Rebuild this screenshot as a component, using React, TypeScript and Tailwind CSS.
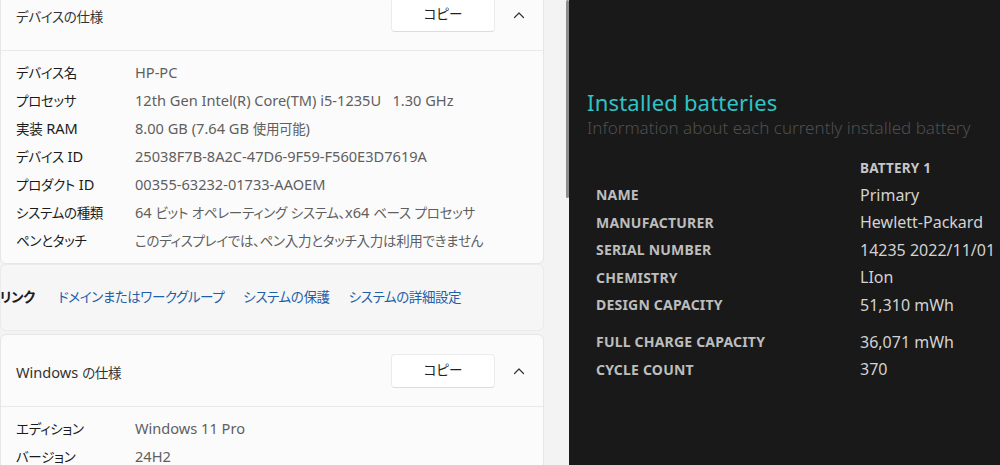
import React from "react";

const leftFont = "[font-family:'Noto_Sans','Noto_Sans_CJK_JP',sans-serif] [font-feature-settings:'palt']";
const rightFont = "[font-family:'Noto_Sans',sans-serif]";

// Japanese runs render narrower than Latin in the original UI font, so size them separately
const Mixed = ({ text }: { text: string }) => (
  <>
    {text.split(/([\u3000-\u30ff\u4e00-\u9fff\uff00-\uffef]+)/).map((part, i) =>
      part === "" ? null : /[\u3000-\u30ff\u4e00-\u9fff\uff00-\uffef]/.test(part) ? (
        <span key={i} className="text-[13.5px] tracking-[-0.3px]">{part}</span>
      ) : (
        <span key={i} className="text-[14.6px]">{part}</span>
      )
    )}
  </>
);

const Chevron = () => (
  <svg width="12" height="8" viewBox="0 0 12 8" fill="none">
    <polyline points="1.5,6.5 6,2 10.5,6.5" stroke="#333" strokeWidth="1.2" strokeLinecap="round" strokeLinejoin="round" />
  </svg>
);

const SpecCard = ({ title, rows }: { title: string; rows: [string, string][] }) => (
  <div className="bg-[#fbfbfb] border border-[#e6e6e6] rounded-[6px]">
    <div className="h-[72px] flex items-center pl-[15px] border-b border-[#e9e9e9]">
      <div className="flex-1 text-[#333] pt-[2px]">
        <Mixed text={title} />
      </div>
      <button className="w-[104px] h-[34px] bg-white border border-[#ebebeb] border-b-[#dcdcdc] rounded-[4px] text-[13.5px] text-[#222]">
        コピー
      </button>
      <div className="w-[48px] flex justify-center">
        <Chevron />
      </div>
    </div>
    <div className="pt-[7px] pb-[9px]">
      {rows.map(([k, v]) => (
        <div key={k} className="h-[28px] flex items-center pl-[15px] whitespace-pre">
          <div className="w-[119px] text-[#1b1b1b]">
            <Mixed text={k} />
          </div>
          <div className="text-[#5f5f5f]">
            <Mixed text={v} />
          </div>
        </div>
      ))}
    </div>
  </div>
);

const battery: [string, string][] = [
  ["NAME", "Primary"],
  ["MANUFACTURER", "Hewlett-Packard"],
  ["SERIAL NUMBER", "14235 2022/11/01"],
  ["CHEMISTRY", "LIon"],
  ["DESIGN CAPACITY", "51,310 mWh"],
];

const battery2: [string, string][] = [
  ["FULL CHARGE CAPACITY", "36,071 mWh"],
  ["CYCLE COUNT", "370"],
];

const BatteryRow = ({ k, v }: { k: string; v: string }) => (
  <div className="h-[27.5px] flex items-center">
    <div className="w-[273px] pl-[9px] text-[14px] font-bold text-[#bdbdbd] tracking-[0.2px]">{k}</div>
    <div className="text-[16px] text-[#d2d2d2]">{v}</div>
  </div>
);

export default function App() {
  return (
    <div className="w-[1000px] h-[465px] flex overflow-hidden bg-[#f3f3f3]">
      {/* Settings: About */}
      <div className={`w-[569px] h-full flex overflow-hidden ${leftFont}`}>
        <div className="w-[544px] shrink-0 -mt-[22px]">
          <SpecCard
            title="デバイスの仕様"
            rows={[
              ["デバイス名", "HP-PC"],
              ["プロセッサ", "12th Gen Intel(R) Core(TM) i5-1235U   1.30 GHz"],
              ["実装 RAM", "8.00 GB (7.64 GB 使用可能)"],
              ["デバイス ID", "25038F7B-8A2C-47D6-9F59-F560E3D7619A"],
              ["プロダクト ID", "00355-63232-01733-AAOEM"],
              ["システムの種類", "64 ビット オペレーティング システム、x64 ベース プロセッサ"],
              ["ペンとタッチ", "このディスプレイでは、ペン入力とタッチ入力は利用できません"],
            ]}
          />
          <div className="h-[67px] flex items-center bg-[#f6f6f6] border border-[#ebebeb] rounded-[6px] whitespace-nowrap">
            <div className="w-[34px] shrink-0 flex justify-end font-semibold text-[#1b1b1b]">
              <span className="text-[13.5px] tracking-[-0.3px]">関連リンク</span>
            </div>
            <div className="flex gap-[19px] ml-[23px] text-[#1f5ea8] text-[13.5px] tracking-[-0.4px]">
              <span>ドメインまたはワークグループ</span>
              <span>システムの保護</span>
              <span>システムの詳細設定</span>
            </div>
          </div>
          <div className="mt-[3px]">
            <SpecCard
              title="Windows の仕様"
              rows={[
                ["エディション", "Windows 11 Pro"],
                ["バージョン", "24H2"],
              ]}
            />
          </div>
        </div>
        <div className="flex-1 flex justify-end">
          <div className="w-[3px] h-[198px] bg-[#8c8c8c] rounded-full" />
        </div>
      </div>

      {/* Battery report */}
      <div className={`flex-1 h-full bg-[#191919] pt-[88px] pl-[18px] ${rightFont}`}>
        <div className="text-[22px] leading-[28px] text-[#2fc3c6] tracking-[0.2px]">Installed batteries</div>
        <div className="mt-[1px] text-[17px] leading-[22px] text-[#4e4e4e] font-light">
          Information about each currently installed battery
        </div>
        <div className="mt-[19px] mb-[3px] h-[20px] flex items-center">
          <div className="w-[273px]" />
          <div className="text-[13.5px] font-bold text-[#c6c6c6] tracking-[0.2px]">BATTERY 1</div>
        </div>
        {battery.map(([k, v]) => (
          <BatteryRow key={k} k={k} v={v} />
        ))}
        <div className="h-[9.5px]" />
        {battery2.map(([k, v]) => (
          <BatteryRow key={k} k={k} v={v} />
        ))}
      </div>
    </div>
  );
}
